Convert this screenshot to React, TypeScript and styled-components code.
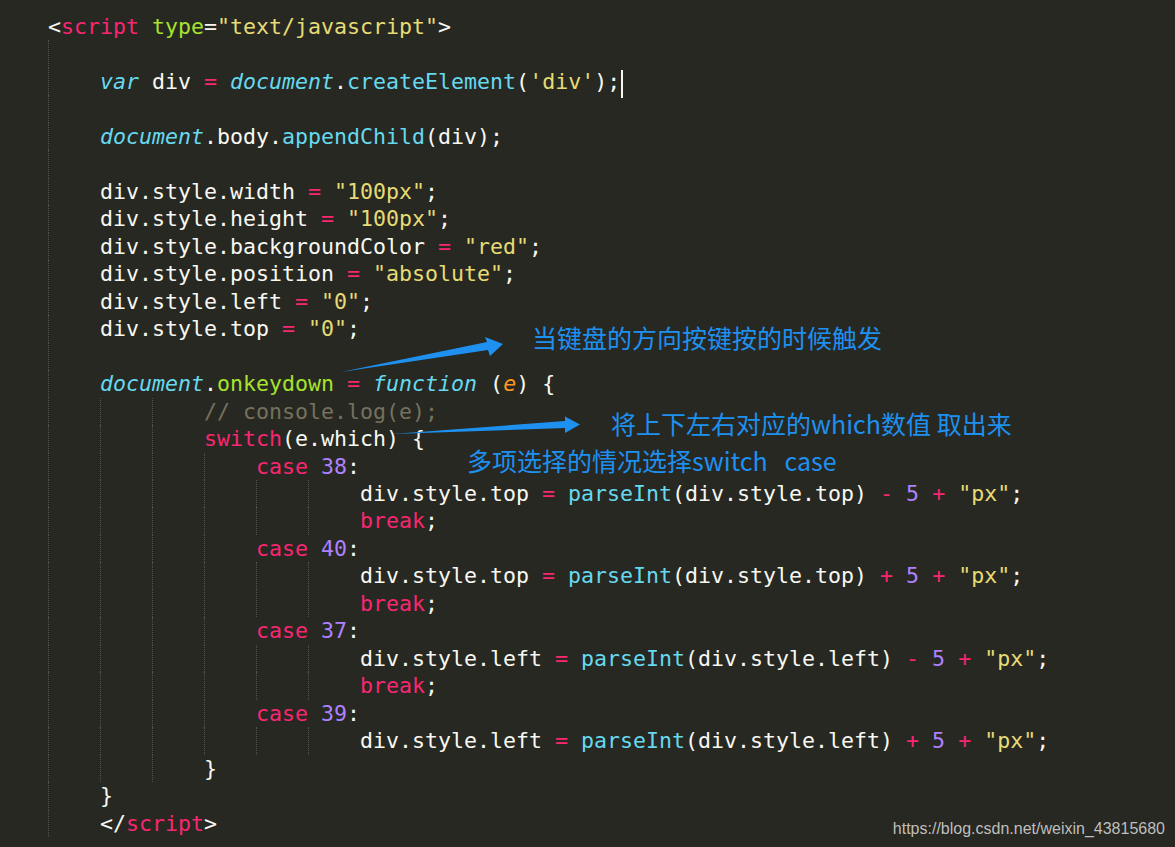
import styled, { createGlobalStyle } from 'styled-components';

type Kind = 'plain' | 'tag' | 'attr' | 'str' | 'kw' | 'ital' | 'fn' | 'num' | 'param' | 'comment' | 'op';
type Token = [string, Kind?];
type Line = { depth: number; tokens: Token[]; cursor?: boolean };

const colors: Record<Kind, string> = {
  plain: '#f8f8f2',
  tag: '#f92672',
  attr: '#a6e22e',
  str: '#e6db74',
  kw: '#f92672',
  ital: '#66d9ef',
  fn: '#66d9ef',
  num: '#ae81ff',
  param: '#fd971f',
  comment: '#75715e',
  op: '#f92672',
};

const styleLine = (prop: string, value: string): Token[] => [
  [`div.style.${prop} `],
  ['=', 'op'],
  [' '],
  [`"${value}"`, 'str'],
  [';'],
];

const moveLine = (prop: string, sign: string): Token[] => [
  [`div.style.${prop} `],
  ['=', 'op'],
  [' '],
  ['parseInt', 'fn'],
  [`(div.style.${prop}) `],
  [sign, 'op'],
  [' '],
  ['5', 'num'],
  [' '],
  ['+', 'op'],
  [' '],
  ['"px"', 'str'],
  [';'],
];

const caseLine = (n: string): Token[] => [['case', 'kw'], [' '], [n, 'num'], [':']];
const breakLine: Token[] = [['break', 'kw'], [';']];

const lines: Line[] = [
  { depth: 0, tokens: [['<'], ['script', 'tag'], [' '], ['type', 'attr'], ['='], ['"text/javascript"', 'str'], ['>']] },
  { depth: 1, tokens: [] },
  {
    depth: 1,
    cursor: true,
    tokens: [
      ['var', 'ital'], [' div '], ['=', 'op'], [' '], ['document', 'ital'], ['.'],
      ['createElement', 'fn'], ['('], ["'div'", 'str'], [');'],
    ],
  },
  { depth: 1, tokens: [] },
  { depth: 1, tokens: [['document', 'ital'], ['.body.'], ['appendChild', 'fn'], ['(div);']] },
  { depth: 1, tokens: [] },
  { depth: 1, tokens: styleLine('width', '100px') },
  { depth: 1, tokens: styleLine('height', '100px') },
  { depth: 1, tokens: styleLine('backgroundColor', 'red') },
  { depth: 1, tokens: styleLine('position', 'absolute') },
  { depth: 1, tokens: styleLine('left', '0') },
  { depth: 1, tokens: styleLine('top', '0') },
  { depth: 1, tokens: [] },
  {
    depth: 1,
    tokens: [
      ['document', 'ital'], ['.'], ['onkeydown', 'attr'], [' '], ['=', 'op'], [' '],
      ['function', 'ital'], [' ('], ['e', 'param'], [') {'],
    ],
  },
  { depth: 3, tokens: [['// console.log(e);', 'comment']] },
  { depth: 3, tokens: [['switch', 'kw'], ['(e.which) {']] },
  { depth: 4, tokens: caseLine('38') },
  { depth: 6, tokens: moveLine('top', '-') },
  { depth: 6, tokens: breakLine },
  { depth: 4, tokens: caseLine('40') },
  { depth: 6, tokens: moveLine('top', '+') },
  { depth: 6, tokens: breakLine },
  { depth: 4, tokens: caseLine('37') },
  { depth: 6, tokens: moveLine('left', '-') },
  { depth: 6, tokens: breakLine },
  { depth: 4, tokens: caseLine('39') },
  { depth: 6, tokens: moveLine('left', '+') },
  { depth: 3, tokens: [['}']] },
  { depth: 1, tokens: [['}']] },
  { depth: 1, tokens: [['</'], ['script', 'tag'], ['>']] },
];

const notes = [
  { top: 322, left: 532, text: '当键盘的方向按键按的时候触发' },
  { top: 408, left: 611, text: '将上下左右对应的which数值 取出来' },
  { top: 445, left: 467, text: '多项选择的情况选择switch   case' },
];

export default function App(): JSX.Element {
  return (
    <Page>
      <GlobalStyle />
      <Editor>
        {lines.map((line, i) => (
          <CodeLine key={i}>
            {Array.from({ length: line.depth }).map((_, g) => (
              <IndentGuide key={g} />
            ))}
            {line.tokens.map(([text, kind = 'plain'], t) => (
              <Tok key={t} $kind={kind}>
                {text}
              </Tok>
            ))}
            {line.cursor && <Caret />}
          </CodeLine>
        ))}
      </Editor>

      <Arrows width="1175" height="847" viewBox="0 0 1175 847">
        <polygon points="341,372 487,342 485,337 503,344 490,356 488,350" />
        <polygon points="392,434 565,421 565,416.5 580,424.5 565,433 565,428" />
      </Arrows>

      {notes.map((n) => (
        <Note key={n.text} style={{ top: n.top, left: n.left }}>
          {n.text}
        </Note>
      ))}

      <Watermark>https://blog.csdn.net/weixin_43815680</Watermark>
    </Page>
  );
}

const GlobalStyle = createGlobalStyle`
  html, body {
    margin: 0;
    padding: 0;
    background: #272822;
  }
`;

const Page = styled.div`
  position: relative;
  width: 1175px;
  height: 847px;
  overflow: hidden;
  background: #272822;
`;

const Editor = styled.div`
  display: flex;
  flex-direction: column;
  padding: 13px 0 0 48px;
  font-family: 'DejaVu Sans Mono', 'Liberation Mono', monospace;
  font-size: 21.6px;
`;

const CodeLine = styled.div`
  display: flex;
  align-items: stretch;
  height: 27.48px;
  line-height: 27.48px;
  white-space: pre;
`;

const IndentGuide = styled.span`
  flex: 0 0 52px;
  width: 52px;
  border-left: 1px dotted rgba(255, 255, 255, 0.2);
  box-sizing: border-box;
`;

const Tok = styled.span<{ $kind: Kind }>`
  color: ${(p) => colors[p.$kind]};
  font-style: ${(p) => (p.$kind === 'ital' || p.$kind === 'param' ? 'italic' : 'normal')};
`;

const Caret = styled.span`
  width: 2px;
  margin: 2px 0 -3px 1px;
  background: #f8f8f0;
`;

const Arrows = styled.svg`
  position: absolute;
  top: 0;
  left: 0;
  pointer-events: none;
  fill: #1e90f0;
`;

const Note = styled.div`
  position: absolute;
  font-family: 'Noto Sans CJK SC', 'Noto Sans', sans-serif;
  font-size: 25px;
  line-height: 30px;
  color: #1e90f0;
  white-space: pre;
`;

const Watermark = styled.div`
  position: absolute;
  right: 10px;
  bottom: 9px;
  font-family: 'Liberation Sans', Arial, sans-serif;
  font-size: 16px;
  color: rgba(220, 220, 220, 0.85);
`;
